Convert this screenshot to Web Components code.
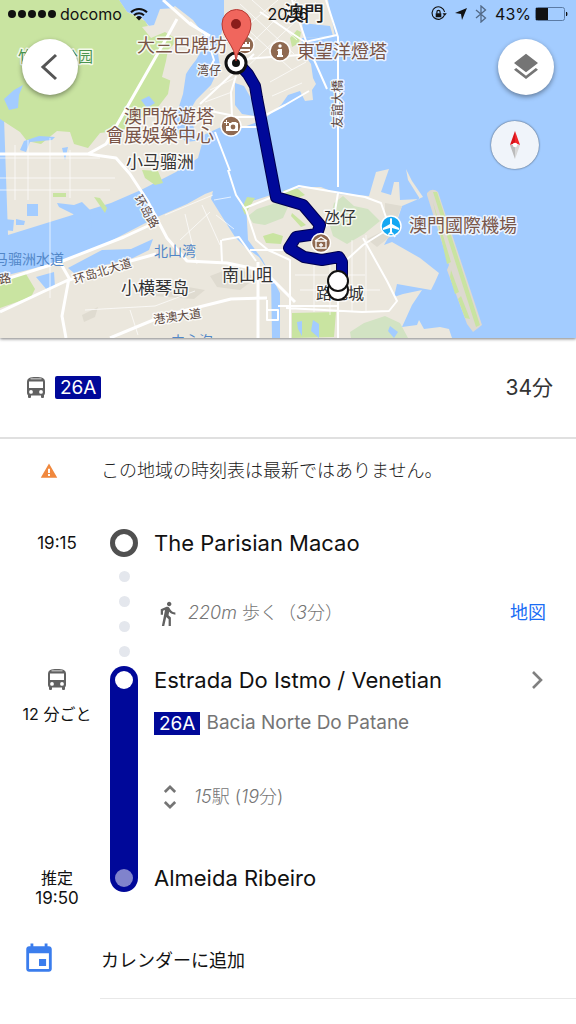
<!DOCTYPE html>
<html lang="ja">
<head>
<meta charset="utf-8">
<meta name="viewport" content="width=device-width, initial-scale=1">
<title>26A - 34分</title>
<style>
body {
    margin: 0;
    background: #fff;
    color: #111;
    font-family: Inter, 'Noto Sans CJK JP', sans-serif;
    font-size: 18px;
}
</style>
</head>
<body>
<transit-app></transit-app>

<script>
function define(name, html) {
    const template = document.createElement('template');
    template.innerHTML = html;
    customElements.define(name, class extends HTMLElement {
        constructor() {
            super();
            this.attachShadow({ mode: 'open' });
            this.shadowRoot.appendChild(template.content.cloneNode(true));
        }
    });
}

// icons: [viewBox, markup]
const icons = {
    bus: ['0 0 18 21', '<path fill-rule="evenodd" d="M0 5C0 1 3 0 9 0s9 1 9 5v11c0 1-.4 1.700-1 2.200V20q0 1-1 1h-1q-1 0-1-1v-1.500H4V20q0 1-1 1H2q-1 0-1-1v-1.800C.4 17.700 0 17 0 16zM2 4.500V11h14V4.500zM3.500 2.200h11v-.8h-11zM4 13a1.900 1.900 0 1 0 0 3.800A1.900 1.900 0 0 0 4 13zm10 0a1.900 1.900 0 1 0 0 3.800A1.900 1.900 0 0 0 14 13z"/>'],
    walk: ['0 0 24 24', '<path d="M13.500 5.500c1.100 0 2-.9 2-2s-.9-2-2-2-2 .9-2 2 .9 2 2 2zM9.800 8.900 7 23h2.100l1.800-8 2.100 2v6h2v-7.500l-2.100-2 .6-3C14.800 12 16.800 13 19 13v-2c-1.900 0-3.500-1-4.300-2.400l-1-1.600c-.4-.6-1-1-1.700-1-.3 0-.5.1-.8.1L6 8.300V13h2V9.600l1.800-.7"/>'],
    warning: ['0 0 24 24', '<path d="M1 21h22L12 2 1 21zm12.300-2.500h-2.600v-2.500h2.600v2.500zm0-4h-2.600V9h2.600v5.500z"/>'],
    event: ['0 0 24 24', '<path d="M17 12h-5v5h5v-5zM16 1v2H8V1H6v2H5c-1.110 0-1.990.9-1.990 2L3 19c0 1.100.89 2 2 2h14c1.100 0 2-.9 2-2V5c0-1.100-.9-2-2-2h-1V1h-2zm3 18H5V8h14v11z"/>'],
    unfold: ['0 0 24 24', '<path d="M12 5.830 15.170 9l1.410-1.410L12 3 7.410 7.590 8.830 9 12 5.830zm0 12.340L8.830 15l-1.410 1.410L12 21l4.590-4.590L15.170 15 12 18.170z"/>'],
    layers: ['0 0 24 24', '<path d="m11.990 18.540-7.370-5.730L3 14.070l9 7 9-7-1.630-1.270-7.380 5.740zM12 16l7.360-5.730L21 9l-9-7-9 7 1.630 1.270L12 16z"/>'],
    back: ['0 0 28 28', '<path d="M20 2 7 14l13 12" fill="none" stroke="currentColor" stroke-width="3"/>'],
    next: ['0 0 18 18', '<path d="m5 1 8 8-8 8" fill="none" stroke="currentColor" stroke-width="2.600"/>'],
    compass: ['0 0 28 28', '<path fill="#d8131b" d="M14 0 9 14l5-2z"/><path fill="#f0262b" d="m14 0 5 14-5-2z"/><path fill="#bbb" d="m9 14 5 14V14z"/><path fill="#d8d8d8" d="m19 14-5 14V14z"/><circle cx="14" cy="14" r="2.200" fill="#fff"/>'],
    wifi: ['0 0 18 14', '<g fill="none" stroke="currentColor" stroke-width="2"><path d="M1 5.200a11.500 11.500 0 0 1 16 0M4 8.300a7.300 7.300 0 0 1 10 0"/></g><path d="M9 13.500 6 10.400a4.300 4.300 0 0 1 6 0z"/>'],
    lock: ['0 0 16 16', '<path d="M13.200 9.500A6.300 6.300 0 1 1 13.600 6" fill="none" stroke="currentColor" stroke-width="1.100"/><path d="M11.500 7.200h4.300l-2.100 2.800zM4.700 7.200h5.600v4H4.700z"/><path d="M5.900 7.500V6a1.600 1.600 0 0 1 3.200 0v1.500" fill="none" stroke="currentColor" stroke-width="1.200"/>'],
    location: ['0 0 12 12', '<path d="M12 0 7 12 6 6 0 5z"/>'],
    bluetooth: ['0 0 12 18', '<path d="m1 5 9.500 8L6 17V1l4.500 4L1 13" fill="none" stroke="currentColor" stroke-width="1.300"/>'],
    battery: ['0 0 33 14', '<rect x="0.500" y="0.500" width="29" height="13" rx="2" fill="none" stroke="#5b7ba5"/><path d="M1 1h12v12H1z"/><path d="M31 5h1q1 2 0 4h-1z"/>']
};

class UiIcon extends HTMLElement {
    constructor() {
        super();
        this.attachShadow({ mode: 'open' });
    }
    connectedCallback() {
        const [box, shape] = icons[this.getAttribute('name')];
        this.shadowRoot.innerHTML = `
<style>
:host {
    display: block;
    flex: none;
    width: 24px;
    height: 24px;
}
svg {
    display: block;
    width: 100%;
    height: 100%;
}
</style>
<svg viewBox="${box}" fill="currentColor" aria-hidden="true">${shape}</svg>`;
    }
}
customElements.define('ui-icon', UiIcon);

define('status-bar', `
<style>
:host {
    display: grid;
    grid-template-columns: 1fr auto 1fr;
    align-items: center;
    height: 28px;
    padding: 0 8px;
    font-size: 16px;
    color: #111;
}
div {
    display: flex;
    align-items: center;
}
.signal {
    gap: 2px;
    margin-right: 4px;
}
.signal i {
    width: 8px;
    height: 8px;
    border-radius: 50%;
    background: currentColor;
}
.wifi {
    width: 18px;
    height: 14px;
    margin-left: 8px;
}
.right {
    justify-content: flex-end;
    gap: 8px;
}
.lock {
    width: 16px;
    height: 16px;
}
.location {
    width: 12px;
    height: 12px;
}
.bluetooth {
    width: 12px;
    height: 18px;
    color: #526987;
}
.battery {
    width: 33px;
    height: 14px;
    margin-left: -4px;
}
</style>
<div>
<div class="signal"><i></i><i></i><i></i><i></i><i></i></div>
<span>docomo</span>
<ui-icon class="wifi" name="wifi"></ui-icon>
</div>
<span>20:16</span>
<div class="right">
<ui-icon class="lock" name="lock"></ui-icon>
<ui-icon class="location" name="location"></ui-icon>
<ui-icon class="bluetooth" name="bluetooth"></ui-icon>
<span>43%</span>
<ui-icon class="battery" name="battery"></ui-icon>
</div>
`);

define('route-map', `
<style>
:host {
    display: block;
    position: relative;
    z-index: 1;
    background: #a3ccff;
    box-shadow: 0 1px 3px rgba(0, 0, 0, 0.5);
}
svg {
    display: block;
    width: 100%;
    height: 338px;
}
.overlay {
    position: absolute;
    inset: 0;
}
.land { fill: #ebe7dd; }
.green { fill: #c9e4a1; }
.park { fill: #d2e3c3; }
.hill { fill: #dfdbd0; }
.water { fill: #a3ccff; }
.road, .street, .lane {
    fill: none;
    stroke: #fff;
    stroke-linejoin: round;
}
.road { stroke-width: 3; }
.street { stroke-width: 2; }
.lane { stroke-width: 1; opacity: 0.7; }
text {
    font-family: 'Noto Sans CJK TC', sans-serif;
    font-size: 18px;
    fill: #333;
    stroke: #fff;
    stroke-width: 3;
    stroke-opacity: 0.8;
    stroke-linejoin: round;
    paint-order: stroke;
}
.poi { fill: #795548; }
.cn { font-family: 'Noto Sans CJK SC', sans-serif; font-size: 17px; }
.mid { font-size: 16px; }
.small { font-size: 12px; fill: #5d4941; }
.sea { font-size: 14px; fill: #5287c8; stroke: none; }
.leaf { font-size: 15px; fill: #4a9650; }
</style>
<svg viewBox="0 0 576 338" preserveAspectRatio="xMidYMid slice" role="img" aria-label="地図">
<path class="land" d="M0 0h119l8 12 15 6 8 9 12-4 5-12 8-5 18 14 9 12 1 14-7 12-10 16-3 20-8 25 3 14 8 9 17-2-5 18-22 14-35 18-30 13-45 14-58 18z"/>
<path class="green" d="M0 0h119l8 12 18 9 8 14 22-6 24 3 4 8-3 12-13 14-16 10-3 18-10 13-35 23-23 3-12 15-14-4-4-12-13-1-16 13-14-3-7-9-20-13z"/>
<path class="land" d="m176 8 26 24 2 14-8 14-12 15-10 7-12-5 4-16 2-11 10-10-13-8-14 6-9-11 12-2 6-16z"/>
<path class="land" d="M0 277l55-14 52-20 48-25 32-14 18-10 8-3-2 8 10 16 14 22 10 10 14 10 12 18 1 63H0z"/>
<path class="land" d="M224 0h104l7 36-33 2-1 12 10 14 2 14 3 6-4 6 1 10-8 1-5-10-12 4-7 10-18 15-22 8-20-1-24 11-8-26 7-12 15-15 9-19-3-18 7-23z"/>
<path class="land" d="M246 203L274 194 303 187 321 187 338 194 369 196 376 172 389 169 381 192 391 195 394 182 399 182 400 200 420 199 408 180 406 169 412 181 423 197 402 206 396 224 384 245 392 242 420 258 439 273 435 282 431 290 397 284 394 297 403 294 422 290 412 305 402 327 417 325 419 320 424 329 440 327 449 329 452 338H280V293L262 259 248 240z"/>
<path class="water" d="m235 83 9 3 8 14 11 4-8 12-13-2-7-9zM302 23l28 3 3 10-29 2zM4 99l10-9 9-5-4 10-1 13-9 2zM141 100l8-4 6 7-8 5zM20 150l4-9 15-5 16 1-3 3-22 2-4 10zM62 148l6-1-3 13zM27 204h11v12H27zM57 203l17 2 8-3 8 8 2 18-7 2-12-16-14-7zM4 219l10 1-1 11-9-1zM16 219l9 2-1 4-8 0zM68 268l34-18 29-1 22-10-4 11-16 8-59 15zM36 277l18-5 1 15-8 3z"/>
<path class="green" d="m0 279 26-5 9 15-4 8-31 11zM290 38l7-8 4 2-2 11-7 4zM94 197l6 1 7 10-2 5zM53 193h13v4H53zM142 170l16 1 5 12-8 2-10-7zM242 208l5-11 8 1-10 17zM284 190l14-1 7 6-12 5-12 1zM292 213l14 12-5 2-10-11zM263 236l10-3 10 3-2 8-15-1zM292 313l44-1-2 25-42 1z"/>
<path class="park" d="m334 203 9-7 11 10 14 3 12 12-16 13-17 10-14-8-4-13zM248 216l9-7 22-7 9 5-5 11-18 7-12-2zM350 332l14-9 21-7 15 7 8 15h-57z"/>
<path class="water" d="m297 322 5-1 0 15-4-7zM313 320l6 4 0 14-8-7zM390 326l8 6-4 6-6-7z"/>
<path class="hill" d="m385 203 17 3-7 17-10-4zM367 239l24-12 5 5-19 15zM82 315l16-8-3 10-11 5zM135 294l25-12 45 8-11 9-40-3zM210 276l26-10 20 12-16 12-23-3z"/>
<path d="M427 193q5-6 11-1l44 133-9 7-6-8-20-54 2-5-22-70z" fill="#ddd9d0"/>
<path class="green" d="m433 192 4 0 43 133-4 2zM433 202l18 60-4 2zM451 270l8 22-4 2-5-17zM461 296l9 23-5-1-7-19z"/>
<path class="lane" d="M0 178h115M0 190h110M15 145v55M28 140v60M50 138v160M70 150v48M0 158h100M232 15l60 55M240 4l54 50M252 0l45 40M230 40l48-40M236 58l60-58M246 68l70-66M270 82l36-20M272 96l30-13M210 90l25-12M205 102l27-10M165 215l48-20M180 240l30-28M185 214l12 50M202 205l18 40M295 275h70M300 290h80M314 262v50M330 255v60M352 240v72M366 235v76M216 215l18 14M214 200l17-3M85 310l70-4 40-15M130 310l8 25"/>
<path class="road" d="M0 154h88l28 4 14 16 17 26 20 38 20 23 40 2 29 6 10 4 29 29M0 281l60-19 64-25 26-12M0 312l66-31 50-16 40-11M61 264l8 14-7 38 4 22M88 154l18-10 20-35 40-70 11-20M110 338l53-22 68-17 36-1M258 262l0 76M163 0l27 24 20 12"/>
<path class="street" d="M228 170l8 25 10 15 10 30 12 10 22 10 0 82M190 22l16 13 8 25-7 14M205 110l25 5 10 12 28 0M215 132l15 39M200 104l30-28 24-22M236 76l-5 16 1 25 30 0 23-12 24-14M260 12l45 30 32-7M292 0l15 44 20 45M230 60l70-5M326 0l12 37v150M245 208l30-12 24-10 36 6 30 5 16 6 6 17 8 17M338 193l-4 24-15 17M341 265l22-20 30-19M363 238l24 43 10 20-8 10-27 1-76-4M338 260v78M221 240l1 22M222 240l17-3 17 24M250 250h40M267 300v20h11v-10h-11M278 306h60"/>
<text class="cn leaf" x="18" y="62">竹仙洞公园</text>
<text class="poi" x="137" y="52">大三巴牌坊</text>
<text class="poi" x="297" y="58">東望洋燈塔</text>
<text class="cn small" x="197" y="75">湾仔</text>
<text class="poi" x="124" y="123">澳門旅遊塔</text>
<text class="poi" x="106" y="142">會展娛樂中心</text>
<text class="cn" x="126" y="168">小马骝洲</text>
<text class="small" transform="translate(342 128) rotate(-90)">友誼大橋</text>
<text class="poi" x="409" y="232">澳門國際機場</text>
<text class="mid" x="324" y="223">氹仔</text>
<text class="mid" x="316" y="299">路氹城</text>
<text class="cn" x="222" y="281">南山咀</text>
<text class="cn" x="121" y="294">小横琴岛</text>
<text class="cn small" transform="translate(154 324) rotate(-8)">港澳大道</text>
<text class="cn small" transform="translate(75 284) rotate(-17)">环岛北大道</text>
<text class="cn small" transform="translate(134 198) rotate(60)">环岛路</text>
<text class="cn small" transform="translate(0 284) rotate(-12)">路</text>
<text class="cn sea" x="154" y="256">北山湾</text>
<text class="cn sea" x="-6" y="264">马骝洲水道</text>
<text class="cn sea" x="171" y="346">中心沟</text>
<text x="284" y="21" font-weight="500" style="font-size:20px;fill:#222">澳門</text>
<g stroke="#fff" stroke-width="1.500" fill="#8f6950">
<circle cx="245" cy="45" r="9"/><circle cx="280" cy="51" r="10"/><circle cx="231" cy="126" r="10"/>
<circle cx="391" cy="226" r="10" fill="#16a8f2"/>
</g>
<g fill="#fff">
<path d="m241 47 0-5h2v2h2v-2h2v2h2v-2h1v5zM240 49h10v2h-10zM278 49h4v6h1v2h-6v-2h1v-4h-1z"/>
<path d="M229 123h2l1-1h4l1 1h1v8h-12v-5h3zM226 120h1v2h2v1h-2v2h-1v-2h-2v-1h2z"/>
<circle cx="280" cy="46" r="1.700"/><circle cx="233" cy="127" r="2.400" fill="#8f6950"/>
<path d="M390 219q1-2 2 0v5l7 4v2l-7-2v4l2 2v1l-3-1-3 1v-1l2-2v-4l-7 2v-2l7-4z"/>
</g>
<path d="m238 63 10 11 7 12 2 12 19 99 27 8 17 20-3 9-21 3-7 11 15 9 18 3 17-3 3 5v18" fill="none" stroke="#00004f" stroke-width="12" stroke-linejoin="round"/>
<path d="m238 63 10 11 7 12 2 12 19 99 27 8 17 20-3 9-21 3-7 11 15 9 18 3 17-3 3 5v18" fill="none" stroke="#000899" stroke-width="10" stroke-linejoin="round"/>
<circle cx="321" cy="243" r="9.500" fill="#8f6950" stroke="#fff" stroke-width="1.500"/>
<path d="m315 241 6-4 6 4M316 241v7h10v-7zM319 245h4M321 243v4" fill="none" stroke="#fff" stroke-width="1.300"/>
<g fill="#fff" stroke="#111" stroke-width="2"><circle cx="338" cy="290" r="10"/><circle cx="338" cy="281" r="10"/></g>
<circle cx="236" cy="63" r="10" fill="#fff" stroke="#111" stroke-width="3"/>
<circle cx="236" cy="63" r="4" fill="#111"/>
<path d="M236 61c-1-16-14-23-14-37a14.500 14.500 0 0 1 29 0c0 14-13 21-15 37z" fill="#f0665d" stroke="#b63731"/>
<circle cx="236" cy="24" r="5" fill="#8b1d1b"/>
</svg>
<div class="overlay"><slot></slot></div>
`);

define('map-controls', `
<style>
:host {
    display: flex;
    justify-content: space-between;
    align-items: flex-start;
    padding: 11px 22px 0;
}
div {
    display: flex;
    flex-direction: column;
    align-items: flex-end;
    gap: 26px;
}
button {
    display: flex;
    align-items: center;
    justify-content: center;
    width: 56px;
    height: 56px;
    padding: 0;
    border: 0;
    border-radius: 50%;
    background: #fff;
    color: #555;
    box-shadow: 0 2px 5px rgba(0, 0, 0, 0.4);
    cursor: pointer;
}
.back {
    width: 28px;
    height: 28px;
}
.layers {
    width: 32px;
    height: 32px;
    color: #757575;
}
.north {
    width: 48px;
    height: 48px;
    margin-right: 15px;
    background: #f0f4fa;
    box-shadow: 0 0 2px rgba(0, 0, 0, 0.7);
}
.north ui-icon {
    width: 28px;
    height: 28px;
}
</style>
<button aria-label="戻る"><ui-icon class="back" name="back"></ui-icon></button>
<div>
<button aria-label="レイヤ"><ui-icon class="layers" name="layers"></ui-icon></button>
<button class="north" aria-label="北"><ui-icon name="compass"></ui-icon></button>
</div>
`);

define('line-badge', `
<style>
:host {
    display: inline-block;
    padding: 0 5px;
    background: #000899;
    color: #fff;
    font-size: 19px;
    line-height: 23px;
}
</style>
<slot></slot>
`);

define('trip-summary', `
<style>
:host {
    display: flex;
    align-items: center;
    gap: 10px;
    height: 99px;
    padding: 0 23px 0 27px;
    border-bottom: 2px solid #e0e0e0;
}
ui-icon {
    width: 18px;
    height: 21px;
    color: #616161;
}
line-badge {
    border-radius: 2px;
}
.total {
    margin-left: auto;
    font-size: 21px;
    line-height: 28px;
    color: #333;
}
</style>
<ui-icon name="bus"></ui-icon>
<line-badge><slot name="line"></slot></line-badge>
<span class="total"><slot name="total"></slot></span>
`);

define('trip-notice', `
<style>
:host {
    display: flex;
    align-items: center;
    padding: 18px 16px 0 40px;
    line-height: 28px;
    color: #222;
    font-weight: 300;
}
ui-icon {
    width: 18px;
    height: 18px;
    margin-right: 43px;
    color: #f0883e;
}
</style>
<ui-icon name="warning"></ui-icon>
<slot></slot>
`);

// one leg of the trip: times on the left, line in the middle, stops on the right
define('trip-leg', `
<style>
:host {
    display: grid;
    grid-template-columns: 86px 28px minmax(0, 1fr);
    column-gap: 10px;
    padding: 0 30px 0 14px;
}
.time {
    display: flex;
    flex-direction: column;
    align-items: center;
    justify-content: space-between;
    text-align: center;
    font-size: 16px;
    line-height: 20px;
}
.rail {
    display: flex;
    flex-direction: column;
    align-items: center;
}
:host([mode="walk"]) .time {
    line-height: 28px;
}
:host([mode="walk"]) .rail {
    gap: 14px;
}
.rail i {
    box-sizing: border-box;
    flex: none;
    border-radius: 50%;
}
.ring {
    width: 28px;
    height: 28px;
    border: 5px solid #505050;
}
.dot {
    width: 11px;
    height: 11px;
    background: #e4e7ed;
}
.bar {
    display: none;
}
:host([mode="bus"]) .ring,
:host([mode="bus"]) .dot {
    display: none;
}
:host([mode="bus"]) .bar {
    display: flex;
    flex: 1;
    flex-direction: column;
    justify-content: space-between;
    margin-bottom: 16px;
    padding: 5px;
    border-radius: 14px;
    background: #000899;
}
.bar i {
    width: 18px;
    height: 18px;
    background: #fff;
}
.bar i:last-child {
    background: #8083cc;
}
.stops {
    padding-left: 6px;
}
:host([mode="bus"]) .stops {
    padding-bottom: 16px;
}
</style>
<div class="time"><slot name="time"></slot></div>
<div class="rail">
<i class="ring"></i><i class="dot"></i><i class="dot"></i><i class="dot"></i><i class="dot"></i>
<div class="bar"><i></i><i></i></div>
</div>
<div class="stops"><slot></slot></div>
`);

define('trip-stop', `
<style>
:host {
    display: flex;
    align-items: center;
    justify-content: space-between;
    font-size: 22px;
    line-height: 28px;
}
</style>
<span><slot></slot></span>
<slot name="action"></slot>
`);

define('trip-detail', `
<style>
:host {
    display: flex;
    align-items: center;
    height: 28px;
    color: #757575;
    font-size: 18px;
    font-weight: 300;
    line-height: 24px;
}
::slotted(a) {
    margin-left: auto;
    color: #1a6cf5;
    font-weight: 400;
    text-decoration: none;
}
</style>
<slot></slot>
`);

define('calendar-action', `
<style>
:host {
    display: block;
    margin-top: 12px;
}
button {
    display: flex;
    align-items: center;
    width: 100%;
    height: 78px;
    padding: 0 0 0 22px;
    border: 0;
    background: none;
    color: #111;
    font: inherit;
    cursor: pointer;
}
ui-icon {
    width: 34px;
    height: 34px;
    margin-right: 45px;
    color: #3b7ded;
}
hr {
    margin: 0 0 0 100px;
    border: 0;
    border-top: 1px solid #e8e8e8;
}
</style>
<button><ui-icon name="event"></ui-icon><slot></slot></button>
<hr>
`);

define('transit-app', `
<style>
:host {
    display: block;
}
.clock {
    font-size: 17px;
}
.walk-leg {
    margin-top: 44px;
}
.walk {
    margin: 42px 0 39px;
}
.walk ui-icon {
    width: 27px;
    height: 27px;
    margin-right: 7px;
    color: #616161;
}
.headsign {
    margin: 15px 0 46px;
    font-size: 19px;
    font-weight: 400;
}
.headsign line-badge {
    margin-right: 6px;
}
.count {
    margin-bottom: 53px;
}
.count button {
    display: flex;
    align-items: center;
    padding: 0;
    border: 0;
    background: none;
    color: inherit;
    font: inherit;
    cursor: pointer;
}
.count ui-icon {
    width: 32px;
    height: 32px;
    margin-right: 8px;
}
.next {
    display: block;
    padding: 0;
    border: 0;
    background: none;
    color: #808080;
    cursor: pointer;
}
.next ui-icon {
    width: 18px;
    height: 18px;
}
.headway ui-icon {
    width: 18px;
    height: 21px;
    margin: 3px auto 14px;
    color: #616161;
}
</style>
<route-map>
<status-bar></status-bar>
<map-controls></map-controls>
</route-map>
<trip-summary>
<span slot="line">26A</span>
<span slot="total">34分</span>
</trip-summary>
<trip-notice>この地域の時刻表は最新ではありません。</trip-notice>

<trip-leg class="walk-leg" mode="walk">
<span slot="time" class="clock">19:15</span>
<trip-stop>The Parisian Macao</trip-stop>
<trip-detail class="walk">
<ui-icon name="walk"></ui-icon>
<span><em>220m</em> 歩く（<em>3</em>分）</span>
<a href="#map">地図</a>
</trip-detail>
</trip-leg>

<trip-leg mode="bus">
<div slot="time" class="headway"><ui-icon name="bus"></ui-icon>12 分ごと</div>
<div slot="time">推定<br><span class="clock">19:50</span></div>
<trip-stop>Estrada Do Istmo / Venetian
<button slot="action" class="next" aria-label="詳細"><ui-icon name="next"></ui-icon></button>
</trip-stop>
<trip-detail class="headsign">
<line-badge>26A</line-badge>
<span>Bacia Norte Do Patane</span>
</trip-detail>
<trip-detail class="count">
<button><ui-icon name="unfold"></ui-icon><span><em>15</em>駅 (<em>19</em>分)</span></button>
</trip-detail>
<trip-stop>Almeida Ribeiro</trip-stop>
</trip-leg>

<calendar-action>カレンダーに追加</calendar-action>
`);
</script>
</body>
</html>
